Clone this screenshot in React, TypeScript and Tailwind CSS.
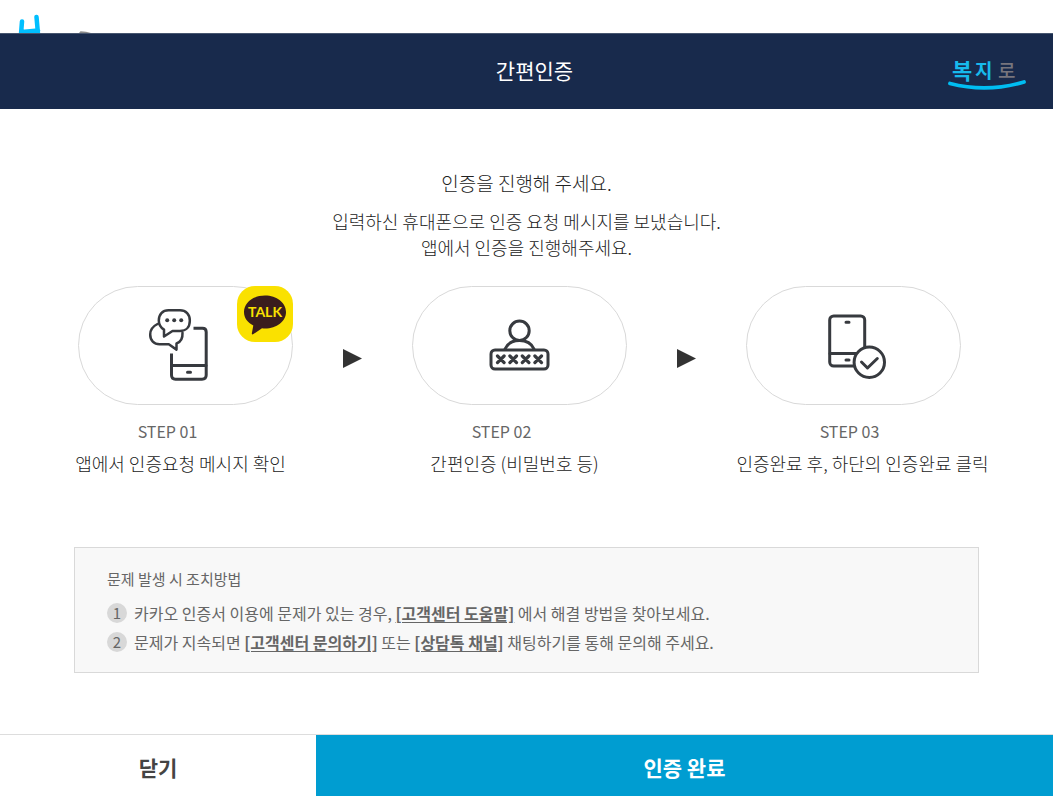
import type { ReactNode } from "react";

function BokjiroLogo() {
  return (
    <svg width="80" height="44" viewBox="0 0 80 44" role="img" aria-label="복지로">
      <g fontFamily="'Noto Sans CJK KR', sans-serif" fontWeight="700">
        <text x="5" y="29" fontSize="22" fill="#17b9ec">복</text>
        <text x="28" y="28" fontSize="19" fill="#17b9ec">지</text>
        <text x="51" y="28" fontSize="19" fontWeight="500" fill="#77757d">로</text>
      </g>
      <path d="M3 33.500Q40 43 77 32" fill="none" stroke="#00bdf2" strokeWidth="3.800" strokeLinecap="round" />
    </svg>
  );
}

function TalkBadge() {
  return (
    <svg className="absolute -top-px -right-px" width="56" height="56" viewBox="0 0 56 56" role="img" aria-label="카카오톡">
      <rect width="56" height="56" rx="18" fill="#fae100" />
      <path
        d="M28 9.500C16.300 9.500 7 16.700 7 26C7 32 10.700 36.700 16.300 39.500L14.800 47.500Q14.900 49.200 16.500 48L25 42.300Q26.500 42.500 28 42.500C39.700 42.500 49 35.300 49 26C49 16.700 39.700 9.500 28 9.500Z"
        fill="#3a1d1d"
      />
      <text x="28" y="31" textAnchor="middle" fontFamily="Lato, sans-serif" fontWeight="700" fontSize="14" fill="#fae100">
        TALK
      </text>
    </svg>
  );
}

const iconProps = {
  width: 80,
  height: 80,
  viewBox: "1 1 80 80",
  fill: "none",
  stroke: "#373a3f",
  strokeWidth: 3,
  strokeLinecap: "round",
  strokeLinejoin: "round",
  "aria-hidden": true,
} as const;

function MessageIcon() {
  return (
    <svg {...iconProps}>
      <path d="M48.500 23.200H57.500Q61.200 23.200 61.200 27V70Q61.200 74.200 57 74.200H30.500Q26.500 74.200 26.500 70V48.500" strokeLinecap="butt" />
      <path d="M27 60.500H61M42.500 67.300H45.500" />
      <path d="M12.500 19C7.500 21.500 5.200 25 5.200 29.500C5.200 35.500 9 39.300 14.500 39.300H23.800L31.500 44.600V38.500C36 37 37.800 33 37.500 27.800" strokeWidth="2.500" />
      <path d="M23.500 5.200H35C41 5.200 44.800 9.500 44.800 15.200V16C44.800 22 41 26 35 26H27.500L19 31.500V24.600C15.500 22.500 13.800 19.500 13.800 15.500C13.800 9.500 17.500 5.200 23.500 5.200Z" strokeWidth="2.500" />
      <g fill="#373a3f" stroke="none">
        <circle cx="22.200" cy="15.300" r="2" />
        <circle cx="29.200" cy="15.300" r="2" />
        <circle cx="36.200" cy="15.300" r="2" />
      </g>
    </svg>
  );
}

function PasswordIcon() {
  return (
    <svg {...iconProps}>
      <circle cx="40.500" cy="25.700" r="9.700" />
      <path d="M26 44C28.500 38.500 34 35.600 40.500 35.600S52.500 38.500 55 44" />
      <rect x="12" y="45" width="57" height="19" rx="4" />
      <path
        d="M18.500 51L25.100 57.600M25.100 51L18.500 57.600M30.900 51L37.500 57.600M37.500 51L30.900 57.600M43.300 51L49.900 57.600M49.900 51L43.300 57.600M55.900 51L62.500 57.600M62.500 51L55.900 57.600"
        strokeWidth="3.200"
      />
    </svg>
  );
}

function CompleteIcon() {
  return (
    <svg {...iconProps}>
      <rect x="16.700" y="11" width="35" height="50" rx="4" />
      <path d="M17 48.500H45M33 17.200H36M33 54.900H36" />
      <circle cx="56.300" cy="57.200" r="15.200" fill="#fff" />
      <path d="M48.500 57L54.500 63L64.300 53.500" />
    </svg>
  );
}

type StepProps = {
  step: string;
  label: string;
  icon: ReactNode;
  badge?: ReactNode;
  captionClass: string;
};

function Step({ step, label, icon, badge, captionClass }: StepProps) {
  return (
    <li>
      <div className="relative flex h-[119px] items-center justify-center rounded-full border border-[#d9d9d9]">
        {icon}
        {badge}
      </div>
      <div className={`mt-[14px] flex flex-col items-center whitespace-nowrap ${captionClass}`}>
        <p className="pr-[26px] text-[16px] leading-6 text-[#666]">{step}</p>
        <p className="mt-[6px] text-[18px] leading-7 font-light">{label}</p>
      </div>
    </li>
  );
}

function Arrow() {
  return (
    <li aria-hidden="true" className="flex h-[119px] justify-center pt-[62px]">
      <svg width="19" height="20" viewBox="0 0 19 20">
        <path d="M0 1L19 10.500L0 20Z" fill="#333" />
      </svg>
    </li>
  );
}

function Num({ children }: { children: ReactNode }) {
  return (
    <span className="mr-[7px] flex size-5 shrink-0 items-center justify-center rounded-full bg-[#d8d8d8] text-[15px] leading-5">
      {children}
    </span>
  );
}

function HelpLink({ children }: { children: ReactNode }) {
  return (
    <a href="#" className="font-bold underline underline-offset-2">
      {children}
    </a>
  );
}

export default function App() {
  return (
    <div className="flex min-h-screen flex-col bg-white font-['Noto_Sans_CJK_KR',sans-serif] text-[#222]">
      {/* Site bar left visible above the dialog */}
      <div className="h-[33px] overflow-hidden pl-[18px]">
        <svg width="76" height="33" viewBox="0 0 76 33" aria-hidden="true">
          <g fill="none" stroke="#00bfff" strokeWidth="4.500" strokeLinecap="round">
            <path d="M4 21.500L3 34M18.500 17L20 34M4 32L20 30.500" />
          </g>
          <path d="M61 33L62.500 31.300L68 31.800L73 33Z" fill="#8a8a8a" />
        </svg>
      </div>

      {/* Header */}
      <header className="grid h-[76px] grid-cols-[1fr_auto_1fr] items-center border-t border-[#47566f] bg-[#182a4c] px-[26px]">
        <h1 className="col-start-2 pb-0.5 pl-4 text-[21px] text-white">간편인증</h1>
        <div className="justify-self-end">
          <BokjiroLogo />
        </div>
      </header>

      <main className="mx-auto w-full max-w-[905px] flex-1 pt-[60px] pb-[61px]">
        <div className="text-center font-light">
          <h2 className="text-[19px] leading-7">인증을 진행해 주세요.</h2>
          <p className="mt-[11px] text-[18px] leading-[26px]">
            입력하신 휴대폰으로 인증 요청 메시지를 보냈습니다.
            <br />
            앱에서 인증을 진행해주세요.
          </p>
        </div>

        {/* Steps */}
        <ol className="mt-[26px] grid grid-cols-[215px_1fr_215px_1fr_215px] pr-[18px] pl-1">
          <Step
            step="STEP 01"
            label="앱에서 인증요청 메시지 확인"
            icon={<MessageIcon />}
            badge={<TalkBadge />}
            captionClass="pr-[10px]"
          />
          <Arrow />
          <Step step="STEP 02" label="간편인증 (비밀번호 등)" icon={<PasswordIcon />} captionClass="pr-[10px]" />
          <Arrow />
          <Step
            step="STEP 03"
            label="인증완료 후, 하단의 인증완료 클릭"
            icon={<CompleteIcon />}
            captionClass="pl-[18px]"
          />
        </ol>

        {/* Troubleshooting */}
        <section className="mt-[70px] border border-[#d9d9d9] bg-[#f8f8f8] px-8 pt-[19px] pb-[18px] text-[#666]">
          <h3 className="text-[15px] leading-6">문제 발생 시 조치방법</h3>
          <ol className="mt-[10px] flex flex-col gap-[5px] text-[16px] leading-6">
            <li className="flex items-center">
              <Num>1</Num>
              <p>
                카카오 인증서 이용에 문제가 있는 경우, <HelpLink>[고객센터 도움말]</HelpLink> 에서 해결 방법을 찾아보세요.
              </p>
            </li>
            <li className="flex items-center">
              <Num>2</Num>
              <p>
                문제가 지속되면 <HelpLink>[고객센터 문의하기]</HelpLink> 또는 <HelpLink>[상담톡 채널]</HelpLink> 채팅하기를 통해
                문의해 주세요.
              </p>
            </li>
          </ol>
        </section>
      </main>

      {/* Bottom buttons */}
      <footer className="grid h-[62px] grid-cols-[3fr_7fr] border-t border-[#ddd] text-[21px] font-bold">
        <button type="button" className="bg-white pt-1 text-[#444]">
          닫기
        </button>
        <button type="button" className="bg-[#009dd1] pt-1 text-white">
          인증 완료
        </button>
      </footer>
    </div>
  );
}
